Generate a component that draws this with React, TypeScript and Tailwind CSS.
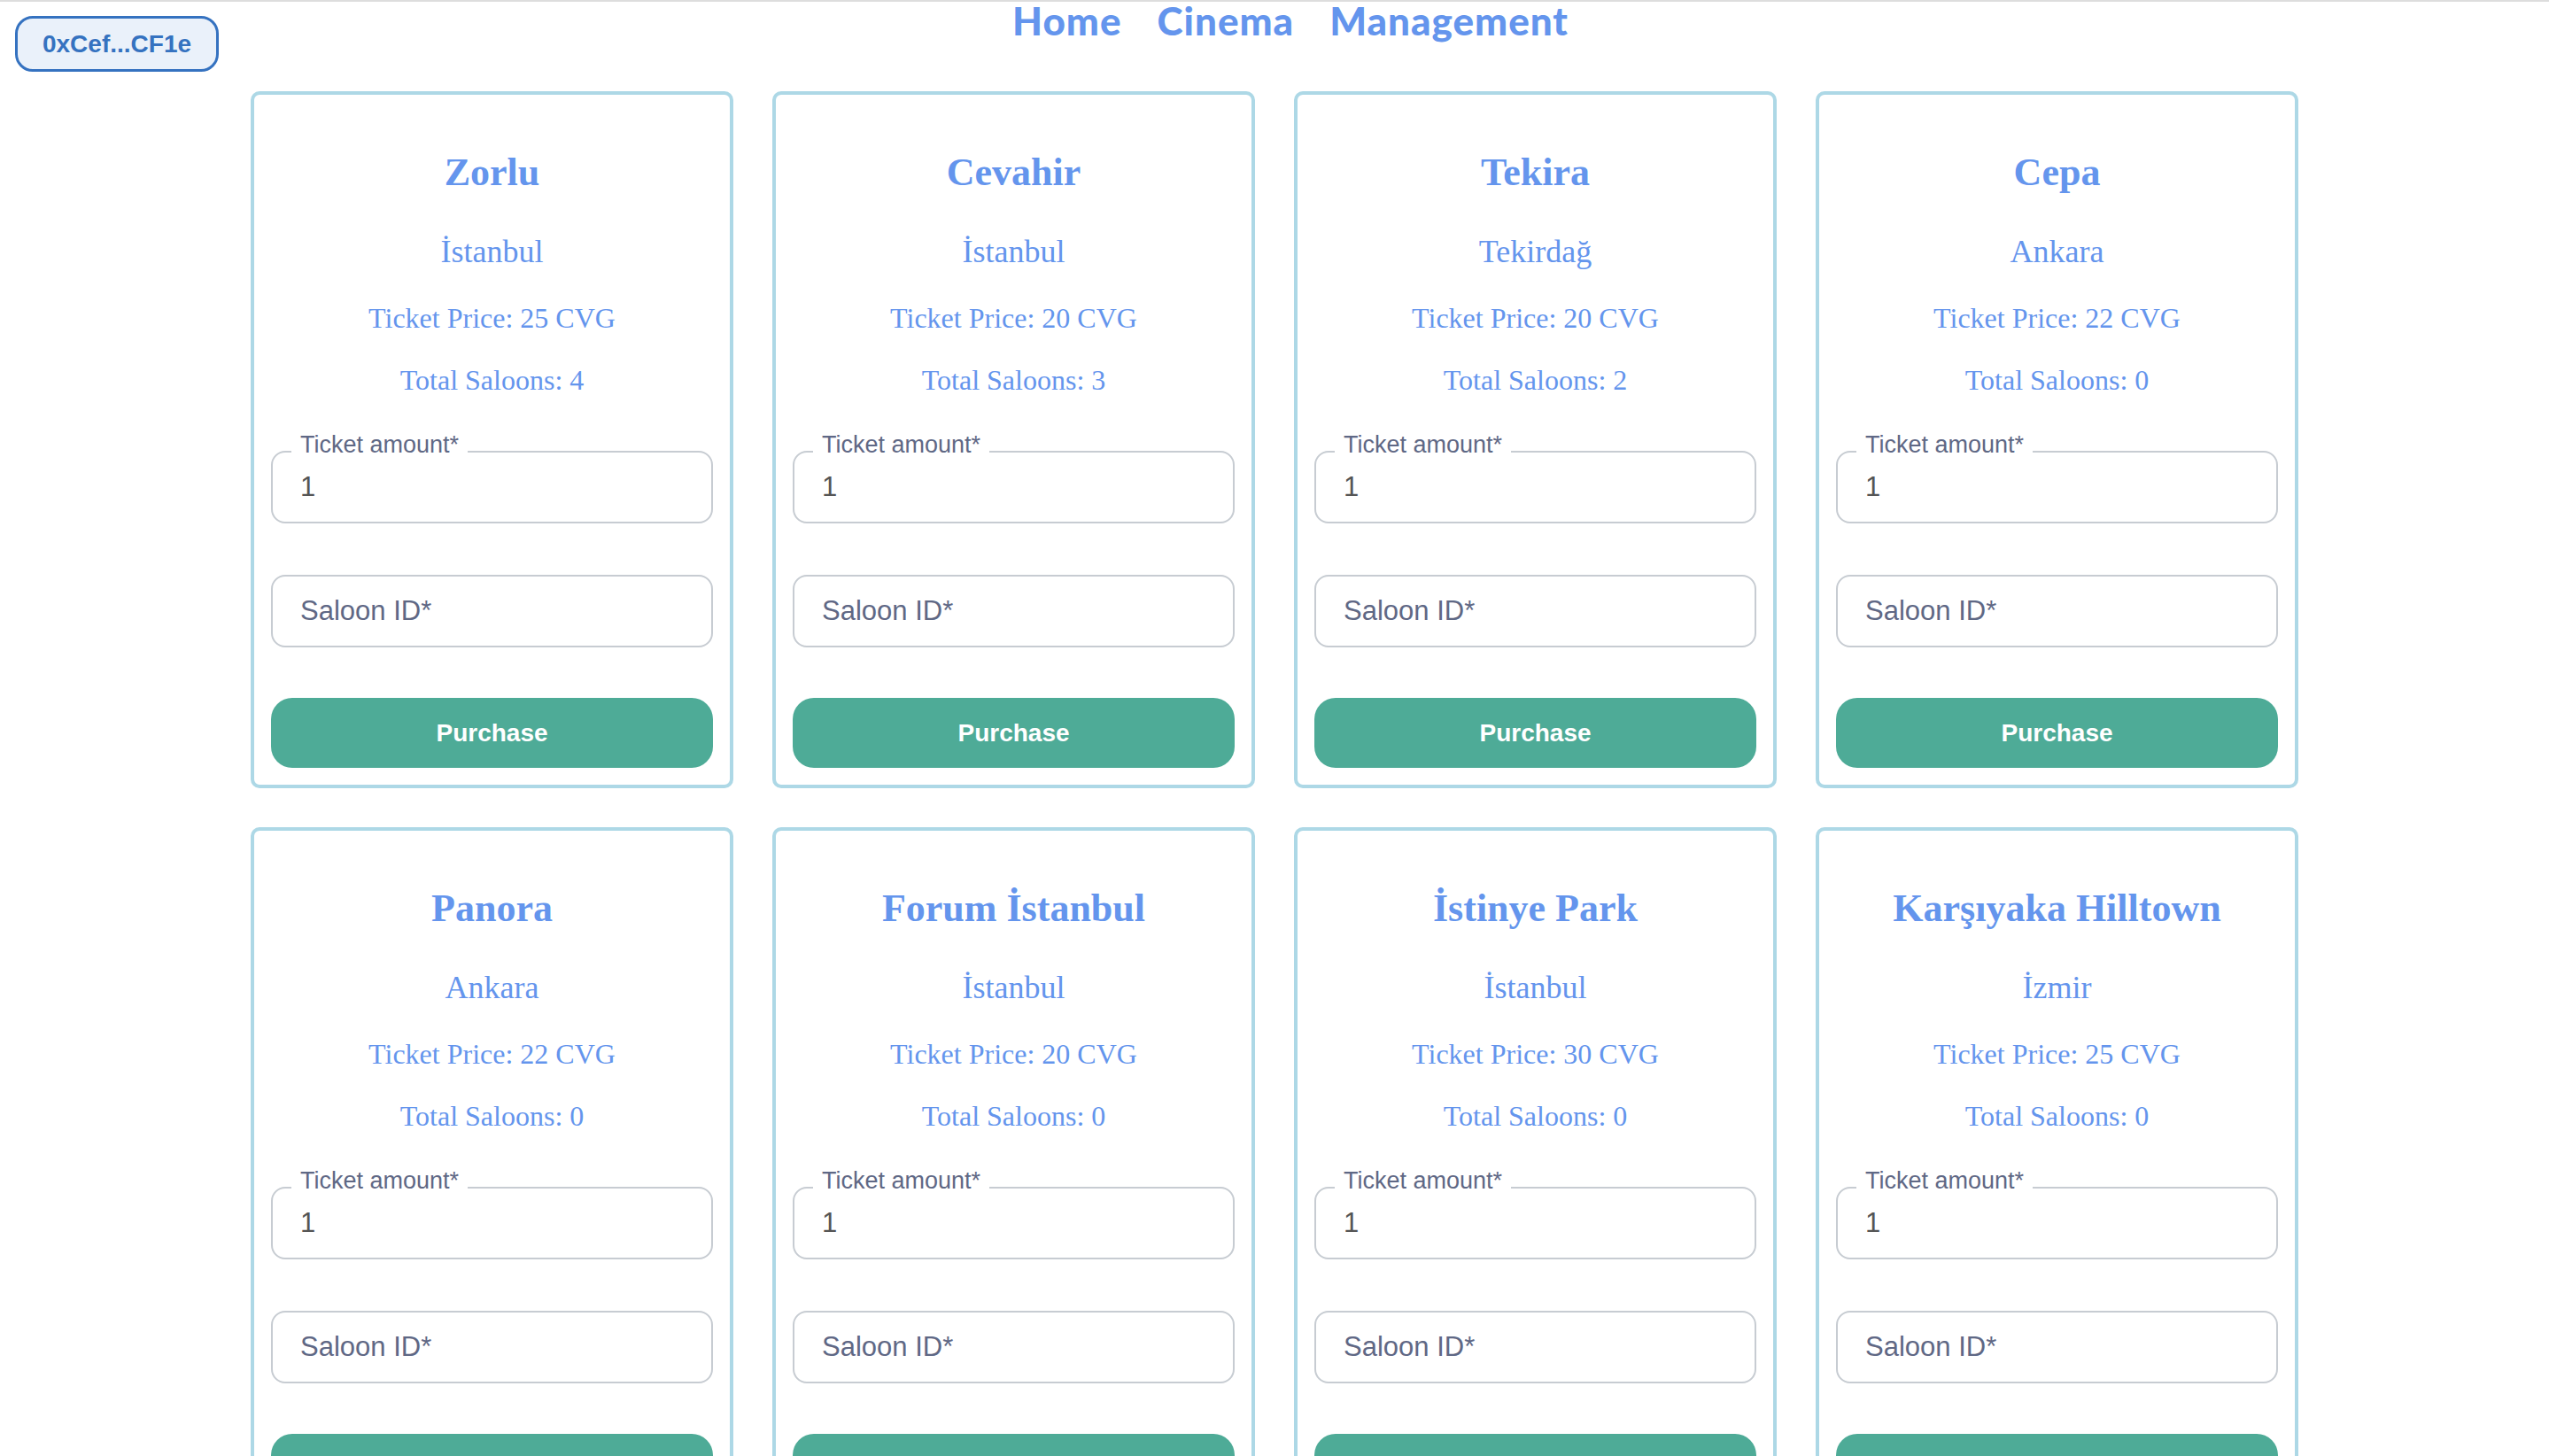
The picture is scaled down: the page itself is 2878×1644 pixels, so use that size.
const cinemas = [
  { name: "Zorlu", city: "İstanbul", price: 25, saloons: 4 },
  { name: "Cevahir", city: "İstanbul", price: 20, saloons: 3 },
  { name: "Tekira", city: "Tekirdağ", price: 20, saloons: 2 },
  { name: "Cepa", city: "Ankara", price: 22, saloons: 0 },
  { name: "Panora", city: "Ankara", price: 22, saloons: 0 },
  { name: "Forum İstanbul", city: "İstanbul", price: 20, saloons: 0 },
  { name: "İstinye Park", city: "İstanbul", price: 30, saloons: 0 },
  { name: "Karşıyaka Hilltown", city: "İzmir", price: 25, saloons: 0 },
];

export default function App() {
  return (
    <div className="min-h-screen border-t-2 border-[#dddddd] bg-white">
      <header className="grid grid-cols-[1fr_auto_1fr] items-start">
        <div className="pl-[17px] pt-[16px]">
          <button
            type="button"
            className="flex h-[63px] w-[230px] items-center justify-center rounded-[20px] border-[3px] border-[#3572c0] bg-[#eaf1fa] font-['Liberation_Sans',Arial,sans-serif] text-[28px] font-bold text-[#3572c0]"
          >
            0xCef...CF1e
          </button>
        </div>

        <nav className="flex gap-[40px] pl-[36px] font-['Lato',sans-serif] text-[44px] font-black leading-[42px] tracking-[1px] text-[#6495ed]">
          <a href="#">Home</a>
          <a href="#">Cinema</a>
          <a href="#">Management</a>
        </nav>

        <div />
      </header>

      <main className="mt-[22px] grid grid-cols-[repeat(4,545px)] justify-center gap-[44px_44px]">
        {cinemas.map((cinema) => (
          <CinemaCard key={cinema.name} {...cinema} />
        ))}
      </main>
    </div>
  );
}

function CinemaCard({
  name,
  city,
  price,
  saloons,
}: {
  name: string;
  city: string;
  price: number;
  saloons: number;
}) {
  return (
    <div className="flex flex-col rounded-[10px] border-4 border-[#add8e6] px-[19px] pb-[19px] pt-[63px] text-center">
      <div className="font-['Liberation_Serif','Times_New_Roman',serif] text-[#6495ed]">
        <h2 className="text-[44px] font-bold leading-[50px]">{name}</h2>
        <p className="mt-[44px] text-[36px] leading-[41px]">{city}</p>
        <p className="mt-[36px] text-[32px] leading-[37px]">
          Ticket Price: {price} CVG
        </p>
        <p className="mt-[33px] text-[32px] leading-[37px]">
          Total Saloons: {saloons}
        </p>
      </div>

      <div className="relative mt-[61px] text-left font-['Liberation_Sans',Arial,sans-serif]">
        <span className="absolute left-[23px] top-[-20px] bg-white px-[10px] text-[27px] leading-[27px] text-[#5f6885]">
          Ticket amount*
        </span>
        <input
          type="text"
          defaultValue="1"
          className="h-[82px] w-full rounded-[16px] border-2 border-[#c7ccd2] px-[31px] text-[31px] text-[#555555] outline-none"
        />
      </div>

      <input
        type="text"
        placeholder="Saloon ID*"
        className="mt-[58px] h-[82px] w-full rounded-[16px] border-2 border-[#c7ccd2] px-[31px] font-['Liberation_Sans',Arial,sans-serif] text-[31px] text-[#555555] outline-none placeholder:text-[#5f6885]"
      />

      <button
        type="button"
        className="mt-[57px] h-[79px] w-full rounded-[24px] bg-[#4eab97] font-['Liberation_Sans',Arial,sans-serif] text-[28px] font-bold text-white"
      >
        Purchase
      </button>
    </div>
  );
}
